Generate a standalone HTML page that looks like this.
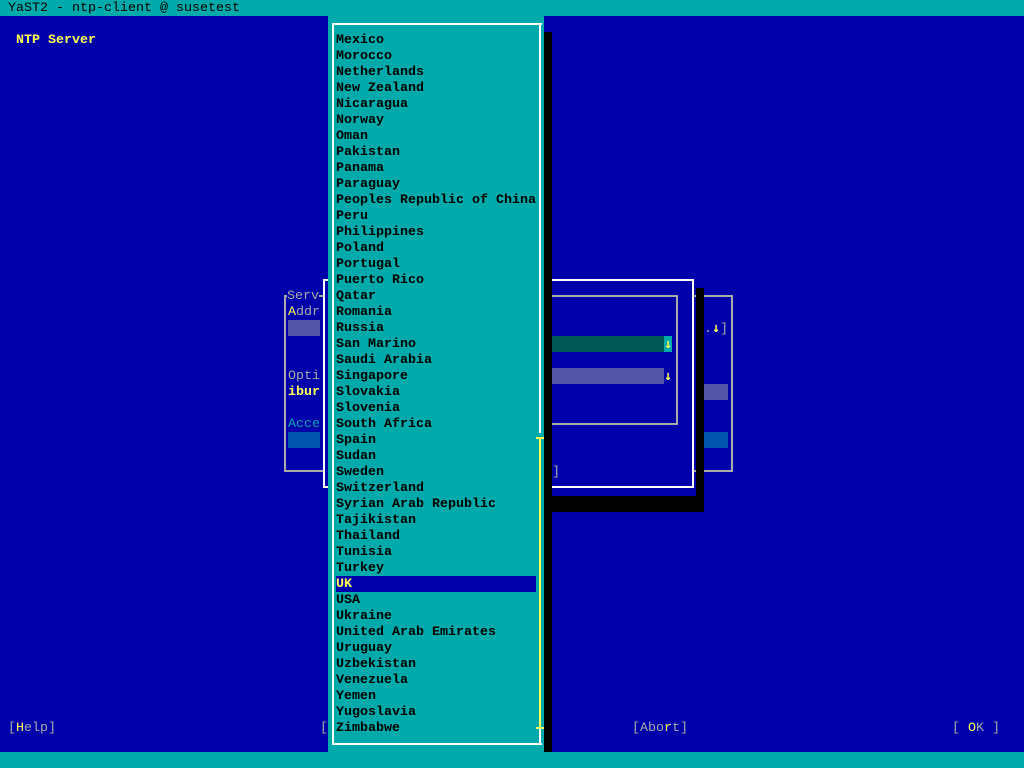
<!DOCTYPE html>
<html><head><meta charset="utf-8"><style>
*{margin:0;padding:0;box-sizing:border-box}
body{width:1024px;height:768px;background:#0000aa;position:relative;overflow:hidden;font-family:"Liberation Mono","DejaVu Sans Mono",monospace;font-size:13.33px;line-height:16px}
.a{position:absolute;white-space:pre}
.t{padding-top:1px}
.b{font-weight:bold}
.y{color:#ffff55}.g{color:#aaaaaa}.k{color:#000}.c{color:#00aaaa}
.hl{background:#5555aa}
.hg{background:#005555}
.hc{background:#0055aa}
.ar{font-family:"DejaVu Sans Mono",monospace;font-weight:bold;color:#ffff55}
</style></head><body>
<div class="a" style="left:0;top:0;width:1024px;height:16px;background:#00aaaa"></div>
<div class="a k t" style="left:8px;top:0">YaST2 - ntp-client @ susetest</div>
<div class="a" style="left:0;top:752px;width:1024px;height:16px;background:#00aaaa"></div>
<div class="a b y t" style="left:16px;top:32px">NTP Server</div>

<div class="a" style="left:284px;top:295px;width:449px;height:177px;border:2px solid #aaaaaa"></div>
<div class="a g t" style="left:287px;top:288px;background:#0000aa">Serv</div>
<div class="a g t" style="left:288px;top:304px"><span class="y">A</span>ddr</div>
<div class="a hl" style="left:288px;top:320px;width:32px;height:16px"></div>
<div class="a g t" style="left:288px;top:368px">Opti</div>
<div class="a y b t" style="left:288px;top:384px">ibur</div>
<div class="a c t" style="left:288px;top:416px">Acce</div>
<div class="a hc" style="left:288px;top:432px;width:32px;height:16px"></div>

<div class="a" style="left:696px;top:288px;width:8px;height:224px;background:#000"></div>
<div class="a" style="left:552px;top:496px;width:152px;height:16px;background:#000"></div>
<div class="a" style="left:323px;top:279px;width:371px;height:209px;border:2px solid #fff;background:#0000aa"></div>
<div class="a" style="left:544px;top:295px;width:134px;height:130px;border:2px solid #aaaaaa;border-left:none"></div>
<div class="a hg" style="left:552px;top:336px;width:112px;height:16px"></div>
<div class="a ar t" style="left:664px;top:336px;width:8px;height:16px;background:#00aaaa">↓</div>
<div class="a hl" style="left:552px;top:368px;width:112px;height:16px"></div>
<div class="a ar t" style="left:664px;top:368px">↓</div>
<div class="a g t" style="left:552px;top:464px">]</div>
<div class="a g t" style="left:704px;top:320px">.<span class="ar">↓</span>]</div>
<div class="a hl" style="left:704px;top:384px;width:24px;height:16px"></div>
<div class="a hc" style="left:704px;top:432px;width:24px;height:16px"></div>

<div class="a g t" style="left:8px;top:720px">[<span class="y">H</span>elp]</div>
<div class="a g t" style="left:320px;top:720px">[</div>
<div class="a g t" style="left:632px;top:720px">[Abo<span class="y">r</span>t]</div>
<div class="a g t" style="left:952px;top:720px">[ <span class="y">O</span>K ]</div>

<div class="a" style="left:544px;top:32px;width:8px;height:720px;background:#000"></div>
<div class="a" style="left:328px;top:16px;width:216px;height:736px;background:#00aaaa"></div>
<div class="a" style="left:332px;top:23px;width:210px;height:722px;border:2px solid #fff;border-right:none"></div>
<div class="a" style="left:539px;top:23px;width:2px;height:410px;background:#fff"></div>
<div class="a" style="left:539px;top:438px;width:2px;height:290px;background:#ffff55"></div>
<div class="a" style="left:536px;top:437px;width:8px;height:2px;background:#ffff55"></div>
<div class="a" style="left:536px;top:727px;width:8px;height:2px;background:#ffff55"></div>
<div class="a" style="left:539px;top:728px;width:2px;height:17px;background:#fff"></div>
<div class="a" style="left:336px;top:576px;width:200px;height:16px;background:#0000aa"></div>
<div class="a b k t" style="left:336px;top:32px">Mexico
Morocco
Netherlands
New Zealand
Nicaragua
Norway
Oman
Pakistan
Panama
Paraguay
Peoples Republic of China
Peru
Philippines
Poland
Portugal
Puerto Rico
Qatar
Romania
Russia
San Marino
Saudi Arabia
Singapore
Slovakia
Slovenia
South Africa
Spain
Sudan
Sweden
Switzerland
Syrian Arab Republic
Tajikistan
Thailand
Tunisia
Turkey
<span class="y">UK</span>
USA
Ukraine
United Arab Emirates
Uruguay
Uzbekistan
Venezuela
Yemen
Yugoslavia
Zimbabwe</div>
</body></html>
